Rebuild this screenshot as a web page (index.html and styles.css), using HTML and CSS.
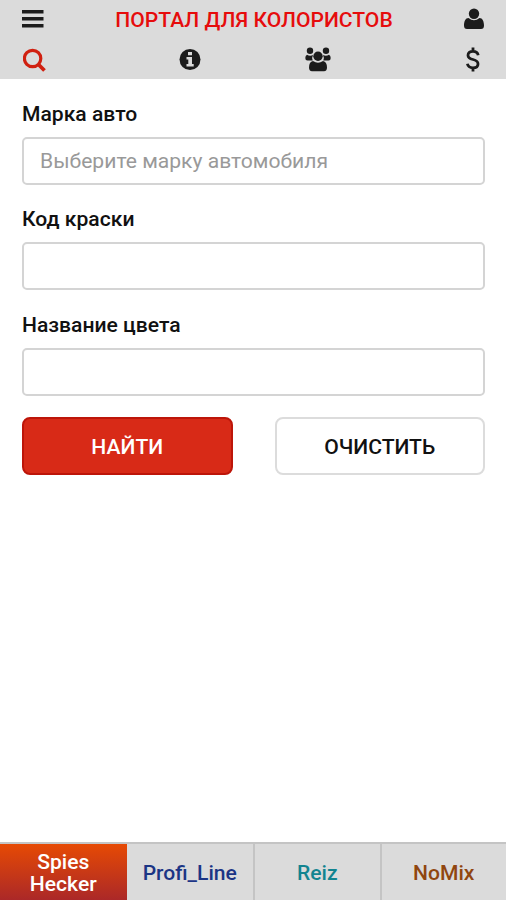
FILE: index.html
```html
<!DOCTYPE html>
<html lang="ru">
<head>
  <meta charset="UTF-8" />
  <meta name="viewport" content="width=device-width, initial-scale=1.0"/>
  <title>Портал для колористов</title>
  <link rel="stylesheet" href="styles.css">
</head>
<body>
  <header class="header">
    <div class="title-bar">
      <button class="icon-btn" aria-label="Меню">
        <svg width="22" height="18" viewBox="0 0 22 18"><path d="M0 0h21.500v3.600H0zM0 7h21.500v3.600H0zM0 14h21.500v3.600H0z"/></svg>
      </button>
      <h1>ПОРТАЛ ДЛЯ КОЛОРИСТОВ</h1>
      <button class="icon-btn" aria-label="Профиль">
        <svg width="20" height="22" viewBox="0 0 20 22"><circle cx="10" cy="5.800" r="5.200"/><path d="M4.500 10Q10 14.500 15.500 10C18.500 10 20 13.500 20 17.500Q20 21 17 21H3Q0 21 0 17.500C0 13.500 1.500 10 4.500 10z"/></svg>
      </button>
    </div>
    <nav class="menu">
      <button class="icon-btn search" aria-label="Поиск">
        <svg width="23" height="24" viewBox="0 0 23 24"><circle cx="9.600" cy="10.500" r="8.200" fill="none" stroke="currentColor" stroke-width="3.200"/><path d="M15.500 16.500l6 6" stroke="currentColor" stroke-width="3.800"/></svg>
      </button>
      <button class="icon-btn" aria-label="Информация">
        <svg width="22" height="22" viewBox="0 0 22 22"><circle cx="11" cy="10.500" r="10.500"/><path class="cut" d="M9 3h4v3.200H9zM7.500 8H13v7h1.700v2.500H7.500V15h1.800v-4.500H7.500z"/></svg>
      </button>
      <button class="icon-btn users" aria-label="Пользователи">
        <svg width="26" height="25" viewBox="0 0 26 25"><circle cx="5" cy="3.800" r="3.200"/><circle cx="21" cy="3.800" r="3.200"/><path d="M2 7.800q3 1.600 6 .2-1.600 3-.3 5.500H2.500Q.3 13.500.3 11q0-2.500 1.700-3.200zM24 7.800q-3 1.600-6 .2 1.600 3 .3 5.500h5.200q2.200 0 2.200-2.500 0-2.500-1.700-3.200z"/><circle cx="13" cy="9.200" r="4.700"/><path d="M8 14q5 3.400 10 0 4 .7 4 6.500 0 3.700-3 3.700H7q-3 0-3-3.700Q4 14.700 8 14z"/></svg>
      </button>
      <button class="icon-btn" aria-label="Цены">
        <svg width="14" height="25" viewBox="0 0 14 25"><path d="M12.200 8.200Q11.500 4.300 7 4.300 2 4.300 2 8.200q0 3 5 4.300t5 4.400q0 3.900-5 3.900-4.800 0-5.600-4M7 .5v4M7 20.500v4" fill="none" stroke="currentColor" stroke-width="2.800"/></svg>
      </button>
    </nav>
  </header>

  <form class="form">
    <label for="brand">Марка авто</label>
    <input type="text" id="brand" placeholder="Выберите марку автомобиля">
    <label for="code">Код краски</label>
    <input type="text" id="code">
    <label for="color">Название цвета</label>
    <input type="text" id="color">
    <div class="btn-container">
      <button type="button" class="btn btn-find">НАЙТИ</button>
      <button type="reset" class="btn">ОЧИСТИТЬ</button>
    </div>
  </form>

  <!-- Выбор базы -->
  <footer class="tabs">
    <a class="tab active">Spies Hecker</a>
    <a class="tab">Profi_Line</a>
    <a class="tab reiz">Reiz</a>
    <a class="tab nomix">NoMix</a>
  </footer>
</body>
</html>
```
FILE: styles.css
```css
* {
  box-sizing: border-box;
}
body {
  margin: 0;
  height: 100vh;
  display: flex;
  flex-direction: column;
  font-family: Roboto, sans-serif;
  font-size: 21.1px;
  font-weight: 500;
  color: #111;
  background: #fff;
}
.header {
  height: 79px;
  background: #dbdbdb;
}
.title-bar {
  display: flex;
  justify-content: space-between;
  align-items: center;
  height: 38px;
  padding: 0 22px;
}
.menu {
  display: grid;
  grid-template-columns: repeat(4, 1fr);
  align-items: center;
  justify-items: center;
  height: 43px;
}
h1 {
  margin: 2px 0 0;
  font-size: 21.1px;
  font-weight: 500;
  line-height: 36px;
  color: #e60c0c;
  white-space: nowrap;
}
.icon-btn {
  display: flex;
  padding: 0;
  border: none;
  background: none;
  color: #1c1c1c;
  cursor: pointer;
}
.icon-btn svg {
  fill: currentColor;
}
.icon-btn .cut {
  fill: #dbdbdb;
}
.menu .icon-btn:first-child {
  justify-self: start;
  margin-left: 23px;
}
.menu .icon-btn:last-child {
  justify-self: end;
  margin-right: 26px;
}
.search {
  color: #d02010;
}
.users {
  margin-left: 4px;
}
.form {
  flex: 1;
  padding: 22px 21px 0 22px;
}
label {
  display: block;
  height: 36px;
  line-height: 25px;
}
input {
  display: block;
  width: 100%;
  height: 48px;
  margin-bottom: 21.4px;
  padding: 0 16px 2px;
  border: 2px solid #d4d4d4;
  border-radius: 5px;
  font: 400 21.1px Roboto, sans-serif;
  color: #111;
}
input::placeholder {
  color: #999;
}
.btn-container {
  display: grid;
  grid-template-columns: 1fr 1fr;
  gap: 42px;
}
.btn {
  height: 58px;
  padding-bottom: 1px;
  border: 2px solid #dcdcdc;
  border-radius: 8px;
  background: #fff;
  color: #111;
  font: 500 21.1px Roboto, sans-serif;
  cursor: pointer;
}
.btn-find {
  background: #d82a17;
  border-color: #bd1509;
  color: #fff;
}
.tabs {
  display: grid;
  grid-template-columns: repeat(4, 1fr);
  height: 58px;
  border-top: 2px solid #c4c4c4;
  background: #dbdbdb;
}
.tab {
  display: flex;
  align-items: center;
  justify-content: center;
  padding-top: 1px;
  line-height: 22px;
  text-align: center;
  color: #1c3585;
}
.tab.active {
  padding: 1px 24px 0;
  background: linear-gradient(#e64a04, #ab2828);
  color: #fff;
}
.reiz,
.nomix {
  border-left: 2px solid #c4c4c4;
}
.reiz {
  color: #128490;
}
.nomix {
  color: #90460f;
}
```
